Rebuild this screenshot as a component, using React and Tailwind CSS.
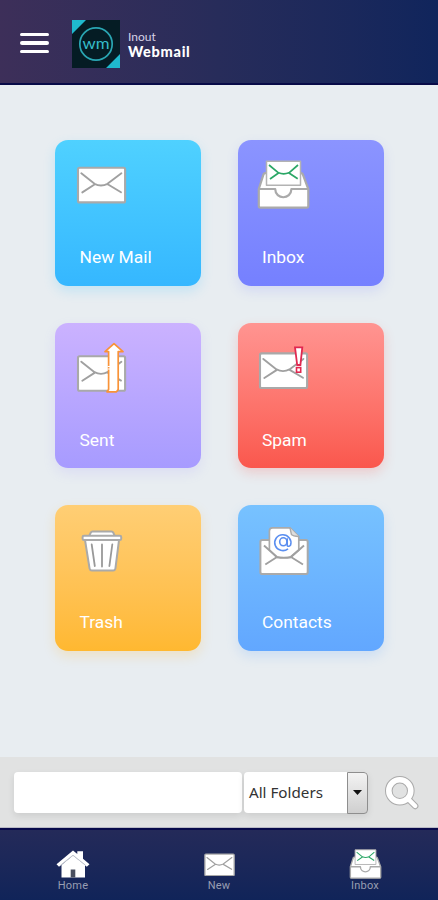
import React from 'react';

const EnvelopeLines = () => (
  <path
    d="M8.3 19.3L21.5 29.8Q28 33.2 34.5 29.8L48.4 19.3M9.3 38.4L21.5 30.5M34.7 30.3L48 38.2"
    fill="none"
    stroke="#a0a0a0"
    strokeWidth="1.9"
    strokeLinecap="round"
  />
);

const Envelope = () => (
  <>
    <rect x="5" y="13.8" width="47.1" height="34.6" rx="1.5" fill="#fff" stroke="#a9a9a9" strokeWidth="2.1" />
    <EnvelopeLines />
  </>
);

const MailIcon = ({ className = 'h-14 w-14', viewBox = '0 0 56 56' }) => (
  <svg className={className} viewBox={viewBox}>
    <Envelope />
  </svg>
);

const InboxIcon = ({ className = 'h-14 w-14', viewBox = '0 0 56 56' }) => (
  <svg className={className} viewBox={viewBox} strokeLinejoin="round">
    <path d="M2.8 35L7.5 20.3Q8 19.2 9.2 19.2H45Q46.3 19.2 46.8 20.3L52.3 35V52Q52.3 53.6 50.7 53.6H4.3Q2.8 53.6 2.8 52Z" fill="#fff" stroke="#aaa" strokeWidth="2.2" />
    <rect x="10.5" y="7.3" width="34" height="24" fill="#fff" stroke="#b3b3b3" strokeWidth="1.5" />
    <path d="M2.8 35H19.2C19.4 46 35.2 46 35.4 35H52.3" fill="none" stroke="#aaa" strokeWidth="2.2" />
    <path d="M13 11L22.5 18.8Q27.5 20.8 33 18.8L42 11M14 25L22.5 19M33 19L41.7 24.7" fill="none" stroke="#2ba766" strokeWidth="1.7" />
  </svg>
);

const SentIcon = () => (
  <svg className="h-14 w-14" viewBox="0 0 56 56">
    <g transform="translate(0 5.4)">
      <Envelope />
    </g>
    <path d="M41 6.6L50 14.6H45.2V52.5L43.5 54.8H34L35.6 52.5V14.6H32Z" fill="#fff" stroke="#f99338" strokeWidth="1.7" strokeLinejoin="round" />
    <path d="M34.6 29.5H40M34.6 32H38" stroke="#fff" strokeWidth="1" />
  </svg>
);

const SpamIcon = () => (
  <svg className="h-14 w-14" viewBox="0 0 56 56">
    <g transform="translate(-1 2.6)">
      <Envelope />
    </g>
    <path d="M39 10.3H46.3L44.4 28H41.2Z" fill="#fff" stroke="#e02850" strokeWidth="1.8" />
    <rect x="40.5" y="30.6" width="4.2" height="4.6" fill="#fff" stroke="#e02850" strokeWidth="1.6" />
  </svg>
);

const TrashIcon = () => (
  <svg className="h-14 w-14" viewBox="0 0 56 56" fill="#fff" stroke="#aaa" strokeWidth="2" strokeLinejoin="round" strokeLinecap="round">
    <path d="M16.4 16.7L17.7 13.7Q18.3 12.5 19.5 12.5H38.5Q39.7 12.5 40.3 13.7L41.6 16.7" />
    <path d="M12 21H46L42.4 49.6Q42 51.5 40.2 51.5H18.8Q17 51.5 16.6 49.6Z" />
    <rect x="9.6" y="16.7" width="38.6" height="4.4" rx="1.4" />
    <path d="M18.7 25.5L21.8 47M29 25.5V47.5M39.3 25.5L36.4 47" fill="none" stroke="#999" strokeWidth="1.8" />
  </svg>
);

const ContactsIcon = () => (
  <svg className="h-14 w-14" viewBox="0 0 56 56" strokeLinejoin="round">
    <rect x="4.4" y="21" width="47.3" height="34" rx="1.8" fill="#fff" stroke="#aaa" strokeWidth="2" />
    <path d="M13.4 31V12Q13.4 8.8 16.6 8.8H34L42.8 17.5V31L34 38.5H21Z" fill="#fff" stroke="#aaa" strokeWidth="1.7" />
    <path d="M34 8.8L35.4 15.4Q37 17 42.8 17.5" fill="#ddd" stroke="#aaa" strokeWidth="1.4" />
    <path d="M8 26.5L21 38Q28 39.8 35 38L48 26.5M9.3 45.5L21 38M35 38L47 45.5" fill="none" stroke="#a0a0a0" strokeWidth="1.9" />
    <g fill="none" stroke="#5b8ff0" strokeWidth="1.6">
      <path d="M32 29.8A8.1 7.9 0 1 1 34.6 26Q33 28.3 31.2 26.6V19.2" />
      <ellipse cx="27.3" cy="22.8" rx="3.6" ry="4" />
    </g>
  </svg>
);

const HomeIcon = () => (
  <svg className="h-[30px] w-[36px]" viewBox="0 0 36 30">
    <path d="M6.5 16L18 6.5L30 16V28.5H6.5Z" fill="#fff" />
    <path d="M1.5 15.2L18 1.5L22.3 5V2.2H28V9.8L34.5 15.2L31.8 17.8L18 6.4L4 17.8Z" fill="#fff" />
    <path d="M5.5 16.2L18 6.2L30.5 16.2" fill="none" stroke="#bbbfc8" strokeWidth="0.9" />
    <path d="M15.7 20.5H20.3V28.5H15.7Z" fill="#4a5060" />
  </svg>
);

const SearchIcon = () => (
  <svg className="h-9 w-9" viewBox="0 0 36 36" fill="none" strokeLinecap="round">
    <path d="M24.5 24.4L31.2 31" stroke="#aaa" strokeWidth="6.4" />
    <circle cx="15.8" cy="15.8" r="11" stroke="#aaa" strokeWidth="7.6" />
    <path d="M23.5 23.4L31.2 31" stroke="#fff" strokeWidth="4.4" />
    <circle cx="15.8" cy="15.8" r="11" stroke="#fff" strokeWidth="5.6" />
  </svg>
);

const Logo = () => (
  <svg className="h-12 w-12" viewBox="0 0 48 48">
    <rect width="48" height="48" fill="#051c24" />
    <path d="M0 0H14L0 14ZM48 34V48H34Z" fill="#1fb9ce" />
    <circle cx="24" cy="24" r="16.2" fill="none" stroke="#2aa6b3" strokeWidth="1.7" />
    <text x="24" y="28.5" textAnchor="middle" textLength="27" lengthAdjust="spacingAndGlyphs" fontSize="15.5" fontFamily="Lato, sans-serif" fill="#35bdca">wm</text>
  </svg>
);

const tiles = [
  { label: 'New Mail', icon: <MailIcon />, color: 'from-[#4fd1ff] to-[#35b7ff] shadow-[0_5px_12px_#42c3ff38]' },
  { label: 'Inbox', icon: <InboxIcon />, color: 'from-[#8b94ff] to-[#7580ff] shadow-[0_5px_12px_#7983ff30]' },
  { label: 'Sent', icon: <SentIcon />, color: 'from-[#cbb2ff] to-[#a79bff] shadow-[0_5px_12px_#a79bff30]' },
  { label: 'Spam', icon: <SpamIcon />, color: 'from-[#ff9491] to-[#fa574d] shadow-[0_5px_12px_#fa574d38]' },
  { label: 'Trash', icon: <TrashIcon />, color: 'from-[#ffce74] to-[#ffb830] shadow-[0_5px_12px_#ffb83038]' },
  { label: 'Contacts', icon: <ContactsIcon />, color: 'from-[#77c2ff] to-[#62a7ff] shadow-[0_5px_12px_#62a7ff38]' },
];

const Header = () => (
  <header className="flex h-[85px] items-start border-b-2 border-[#080b48] bg-linear-to-r from-[#3d2f59] via-[#272c5a] to-[#10255c] pl-5 pt-5">
    <div className="mt-[13px] flex w-[29px] flex-col gap-[5px]">
      <span className="h-[3.4px] rounded-sm bg-white" />
      <span className="h-[3.4px] rounded-sm bg-white" />
      <span className="h-[3.4px] rounded-sm bg-white" />
    </div>
    <div className="ml-[23px]">
      <Logo />
    </div>
    <div className="ml-2 mt-[10px] font-[Lato,sans-serif] text-white">
      <div className="text-[12px] leading-[14px] text-[#d6d2e6]">Inout</div>
      <div className="text-[14.5px] font-black leading-[15px] tracking-[0.7px]">Webmail</div>
    </div>
  </header>
);

const Tile = ({ label, icon, color }) => (
  <div className={`flex h-[145.5px] w-[146px] flex-col rounded-[13px] bg-linear-to-b pl-[18px] pt-[14px] ${color}`}>
    {icon}
    <span className="ml-[6.5px] mt-[35px] text-[17.4px] leading-6 text-white">{label}</span>
  </div>
);

const SearchBar = () => (
  <section className="flex h-[71px] items-start border-b border-[#b9bac5] bg-[#e1e2e2] pl-[14px] pt-[15px]">
    <div className="h-[41px] w-[228px] rounded bg-white shadow-[0_3px_7px_#00000018]" />
    <div className="ml-[2px] flex h-[41px] w-[124px] items-center justify-between rounded bg-white pl-[5px] shadow-[0_3px_7px_#00000018]">
      <span className="font-['Noto_Sans',sans-serif] text-[15.2px] text-[#333]">All Folders</span>
      <span className="flex h-[42px] w-[21px] items-center justify-center rounded-r-sm border border-[#8e8e8e] bg-linear-to-b from-[#f3f3f3] to-[#cfcfcf]">
        <svg className="h-[5px] w-[9px]" viewBox="0 0 9 5">
          <path d="M0 0H9L4.5 5Z" fill="#111" />
        </svg>
      </span>
    </div>
    <div className="ml-4 mt-[3px]">
      <SearchIcon />
    </div>
  </section>
);

const NavItem = ({ label, children }) => (
  <div className="flex flex-col items-center">
    <div className="flex h-[30px] items-center">{children}</div>
    <span className="text-[11px] leading-[13px] tracking-[0.2px] text-[#989eb2]">{label}</span>
  </div>
);

const BottomNav = () => (
  <nav className="grid h-[72px] grid-cols-3 border-t-2 border-[#07094a] bg-linear-to-b from-[#242a59] to-[#102459] pt-[19px]">
    <NavItem label="Home">
      <HomeIcon />
    </NavItem>
    <NavItem label="New">
      <MailIcon className="h-[23px] w-[31px]" viewBox="4 12 49 37" />
    </NavItem>
    <NavItem label="Inbox">
      <InboxIcon className="h-[30px] w-[33px]" viewBox="1 6 53 49" />
    </NavItem>
  </nav>
);

const App = () => {
  return (
    <div className="flex h-[900px] w-[438px] flex-col overflow-hidden bg-[#e8edf1] font-[Roboto,sans-serif]">
      <Header />
      <main className="grid flex-1 grid-cols-[146px_146px] content-start gap-x-[36.5px] gap-y-[37px] pl-[55px] pt-[55.4px]">
        {tiles.map((tile) => (
          <Tile key={tile.label} {...tile} />
        ))}
      </main>
      <SearchBar />
      <BottomNav />
    </div>
  );
};

export default App;
